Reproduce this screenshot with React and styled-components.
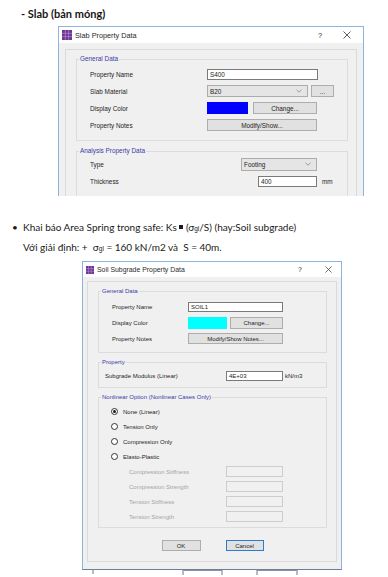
import React from 'react';
import styled, { createGlobalStyle } from 'styled-components';

const GlobalStyle = createGlobalStyle`
  *, *::before, *::after { box-sizing: border-box; }
  html, body { margin: 0; padding: 0; background: #fff; }
  body { width: 388px; height: 577px; overflow: hidden; font-family: Lato, "Liberation Sans", sans-serif; }
`;

const Page = styled.div`
  width: 388px;
  height: 577px;
  padding-top: 8px;
`;

const Heading = styled.p`
  margin: 0;
  padding-left: 21px;
  font: 700 11px/12px Lato, "Liberation Sans", sans-serif;
  color: #161616;
`;

const Dialog = styled.div`
  display: flex;
  flex-direction: column;
  width: ${p => p.$w}px;
  height: ${p => p.$h}px;
  margin: ${p => p.$mt}px 0 0 ${p => p.$ml}px;
  border: 1px solid #8db2dd;
  border-bottom: ${p => (p.$open ? 'none' : '1px solid #6f7f98')};
  background: #f0f0f0;
  overflow: hidden;
  font-family: "Liberation Sans", Arial, sans-serif;
  font-size: ${p => p.$fs}px;
  color: #1e1e1e;
`;

const TitleBar = styled.div`
  flex: none;
  display: flex;
  align-items: center;
  height: ${p => p.$h}px;
  padding: 0 ${p => p.$pr}px 0 3px;
  background: #fff;
  font-size: ${p => p.$fs}px;
  color: #2a2a2a;
`;

const TitleText = styled.span`
  margin-left: 3px;
  white-space: nowrap;
`;

const Help = styled.span`
  margin-left: auto;
  width: 8px;
  text-align: center;
`;

const Close = styled.span`
  display: flex;
  justify-content: center;
  width: 8px;
  margin-left: ${p => p.$gap}px;
`;

const Body = styled.div`
  flex: 1;
  display: flex;
  flex-direction: column;
  min-height: 0;
  padding: ${p => p.$pad};
`;

const Panel = styled.div`
  flex: 1;
  display: flex;
  flex-direction: column;
  border: 1px solid #dadada;
  padding: ${p => p.$pad};
`;

const Group = styled.fieldset`
  flex: none;
  min-width: 0;
  margin: ${p => p.$mt || 0}px 0 0;
  padding: 0;
  border: 1px solid #dcdcdc;
`;

const Legend = styled.legend`
  margin-left: 2px;
  padding: 0 1px;
  line-height: 10px;
  color: #3b3ba6;
`;

const Rows = styled.div`
  display: flex;
  flex-direction: column;
  gap: ${p => p.$gap}px;
  padding: ${p => p.$pad};
`;

const Row = styled.div`
  display: flex;
  align-items: center;
  height: ${p => p.$h}px;
`;

const Label = styled.span`
  flex: ${p => (p.$w ? 'none' : 1)};
  width: ${p => (p.$w ? `${p.$w}px` : 'auto')};
  padding-left: ${p => p.$indent || 0}px;
  color: ${p => (p.$muted ? '#a4a4a4' : '#1e1e1e')};
  white-space: nowrap;
`;

const TextBox = styled.div`
  display: flex;
  align-items: center;
  width: ${p => p.$w}px;
  height: ${p => p.$h}px;
  padding-left: 2px;
  border: 1px solid ${p => (p.$disabled ? '#cdcdcd' : '#7a7a7a')};
  background: ${p => (p.$disabled ? '#f0f0f0' : '#fff')};
  white-space: nowrap;
`;

const Combo = styled.div`
  display: flex;
  align-items: center;
  justify-content: space-between;
  width: ${p => p.$w}px;
  height: ${p => p.$h}px;
  padding: 0 5px 0 2px;
  border: 1px solid #acacac;
  background: #e5e5e5;
`;

const Button = styled.div`
  display: flex;
  align-items: center;
  justify-content: center;
  width: ${p => p.$w}px;
  height: ${p => p.$h}px;
  margin-left: ${p => p.$ml || 0}px;
  border: 1px solid ${p => (p.$default ? '#2b7bd0' : '#adadad')};
  background: #e1e1e1;
  white-space: nowrap;
`;

const Swatch = styled.div`
  width: ${p => p.$w}px;
  height: ${p => p.$h}px;
  background: ${p => p.$color};
`;

const Unit = styled.span`
  flex: none;
  width: ${p => (p.$w ? `${p.$w}px` : 'auto')};
  padding-left: ${p => p.$pl}px;
  white-space: nowrap;
`;

const RadioMark = styled.span`
  display: flex;
  align-items: center;
  justify-content: center;
  width: 7px;
  height: 7px;
  margin-right: 5px;
  border: 1px solid #333;
  border-radius: 50%;
  background: #fff;

  &::after {
    content: '';
    display: ${p => (p.$checked ? 'block' : 'none')};
    width: 3px;
    height: 3px;
    border-radius: 50%;
    background: #1a1a1a;
  }
`;

const Actions = styled.div`
  display: flex;
  justify-content: center;
  gap: 25px;
  margin-top: 12px;
`;

const Notes = styled.div`
  margin-top: 21px;
  padding-left: 23px;
  font: 400 10px/20px Lato, "Liberation Sans", sans-serif;
  color: #1a1a1a;
`;

const Line = styled.p`
  display: flex;
  align-items: center;
  margin: 0;
  white-space: pre;
`;

const Bullet = styled.span`
  width: 11px;
  margin-left: -11px;
`;

const Sub = styled.span`
  display: inline-block;
  font: 400 6.5px/1 "Liberation Sans", Arial, sans-serif;
  vertical-align: -3px;
  margin-top: 4px;
`;

const Square = styled.span`
  display: inline-block;
  width: 4px;
  height: 4px;
  background: #1a1a1a;
`;

const Backdrop = styled.svg`
  display: block;
`;

const AppIcon = ({ size }) => (
  <svg width={size} height={size} viewBox="0 0 10 10">
    <rect width="10" height="10" fill="#6d3596" />
    <path d="M0 3.3H10M0 6.6H10M3.3 0V10M6.6 0V10" stroke="#b58fd0" strokeWidth="0.7" />
  </svg>
);

const CloseIcon = ({ size }) => (
  <svg width={size} height={size} viewBox="0 0 8 8">
    <path d="M0.5 0.5L7.5 7.5M7.5 0.5L0.5 7.5" stroke="#333" strokeWidth="0.8" />
  </svg>
);

const Chevron = () => (
  <svg width="6" height="4" viewBox="0 0 6 4">
    <path d="M0.5 0.8L3 3.2L5.5 0.8" fill="none" stroke="#8a8a8a" strokeWidth="0.8" />
  </svg>
);

const radios = [
  { label: 'None (Linear)', checked: true },
  { label: 'Tension Only' },
  { label: 'Compression Only' },
  { label: 'Elasto-Plastic' },
];

const plasticFields = ['Compression Stiffness', 'Compression Strength', 'Tension Stiffness', 'Tension Strength'];

function SlabDialog() {
  return (
    <Dialog $w={306} $h={170} $mt={6} $ml={58} $fs={6.4} $open>
      <TitleBar $h={16} $pr={12} $fs={7.3}>
        <AppIcon size={10} />
        <TitleText>Slab Property Data</TitleText>
        <Help>?</Help>
        <Close $gap={19}><CloseIcon size={8} /></Close>
      </TitleBar>
      <Body $pad="6px 6px 0">
        <Panel $pad="4px 8px 0 10px">
          <Group>
            <Legend>General Data</Legend>
            <Rows $gap={5} $pad="4px 0 9px 13px">
              <Row $h={12}>
                <Label $w={117}>Property Name</Label>
                <TextBox $w={111} $h={11}>S400</TextBox>
              </Row>
              <Row $h={12}>
                <Label $w={117}>Slab Material</Label>
                <Combo $w={101} $h={12}>B20<Chevron /></Combo>
                <Button $w={23} $h={12} $ml={3}>...</Button>
              </Row>
              <Row $h={12}>
                <Label $w={117}>Display Color</Label>
                <Swatch $w={41} $h={12} $color="#0000ff" />
                <Button $w={64} $h={12} $ml={5}>Change...</Button>
              </Row>
              <Row $h={12}>
                <Label $w={117}>Property Notes</Label>
                <Button $w={110} $h={12}>Modify/Show...</Button>
              </Row>
            </Rows>
          </Group>
          <Group $mt={5}>
            <Legend>Analysis Property Data</Legend>
            <Rows $gap={5} $pad="2px 0 9px 13px">
              <Row $h={12}>
                <Label>Type</Label>
                <Combo $w={76} $h={13}>Footing<Chevron /></Combo>
                <Unit $w={30} $pl={5} />
              </Row>
              <Row $h={12}>
                <Label>Thickness</Label>
                <TextBox $w={59} $h={11}>400</TextBox>
                <Unit $w={30} $pl={5}>mm</Unit>
              </Row>
            </Rows>
          </Group>
        </Panel>
      </Body>
    </Dialog>
  );
}

function SoilDialog() {
  return (
    <Dialog $w={260} $h={309} $mt={4} $ml={82} $fs={6}>
      <TitleBar $h={15} $pr={9} $fs={6.9}>
        <AppIcon size={8} />
        <TitleText>Soil Subgrade Property Data</TitleText>
        <Help>?</Help>
        <Close $gap={20}><CloseIcon size={7} /></Close>
      </TitleBar>
      <Body $pad="4px 4px 7px">
        <Panel $pad="4px 9px 10px 10px">
          <Group>
            <Legend>General Data</Legend>
            <Rows $gap={5} $pad="5px 0 8px 13px">
              <Row $h={11}>
                <Label $w={76}>Property Name</Label>
                <TextBox $w={95} $h={10}>SOIL1</TextBox>
              </Row>
              <Row $h={11}>
                <Label $w={76}>Display Color</Label>
                <Swatch $w={39} $h={12} $color="#00ffff" />
                <Button $w={53} $h={12} $ml={3}>Change...</Button>
              </Row>
              <Row $h={11}>
                <Label $w={76}>Property Notes</Label>
                <Button $w={95} $h={11}>Modify/Show Notes...</Button>
              </Row>
            </Rows>
          </Group>
          <Group $mt={4}>
            <Legend>Property</Legend>
            <Rows $gap={0} $pad="3px 0 6px 6px">
              <Row $h={11}>
                <Label $w={121}>Subgrade Modulus  (Linear)</Label>
                <TextBox $w={57} $h={10}>4E+03</TextBox>
                <Unit $pl={2}>kN/m3</Unit>
              </Row>
            </Rows>
          </Group>
          <Group $mt={4}>
            <Legend>Nonlinear Option  (Nonlinear Cases Only)</Legend>
            <Rows $gap={4} $pad="4px 0 5px 12px">
              {radios.map(r => (
                <Row key={r.label} $h={11}>
                  <RadioMark $checked={r.checked} />
                  <Label>{r.label}</Label>
                </Row>
              ))}
              {plasticFields.map(f => (
                <Row key={f} $h={11}>
                  <Label $w={115} $indent={18} $muted>{f}</Label>
                  <TextBox $w={57} $h={11} $disabled />
                </Row>
              ))}
            </Rows>
          </Group>
          <Actions>
            <Button $w={39} $h={11}>OK</Button>
            <Button $w={38} $h={11} $default>Cancel</Button>
          </Actions>
        </Panel>
      </Body>
    </Dialog>
  );
}

export default function App() {
  return (
    <>
      <GlobalStyle />
      <Page>
        <Heading>- Slab (bản móng)</Heading>
        <SlabDialog />
        <Notes>
          <Line>
            <Bullet>•</Bullet>
            Khai báo Area Spring trong safe: Ks <Square /> (σ<Sub>gl</Sub>/S) (hay:Soil subgrade)
          </Line>
          <Line>
            Với giải định: +  σ<Sub>gl</Sub> = 160 kN/m2 và  S = 40m.
          </Line>
        </Notes>
        <SoilDialog />
        <Backdrop width="388" height="7" viewBox="0 0 388 7">
          <path d="M93 0V4M183 0V5M222 0V5M257 0V5M297 0V5" stroke="#777" strokeWidth="1" />
          <path d="M183 0.5H222M257 0.5H297" stroke="#8a96a8" strokeWidth="1" />
        </Backdrop>
      </Page>
    </>
  );
}
